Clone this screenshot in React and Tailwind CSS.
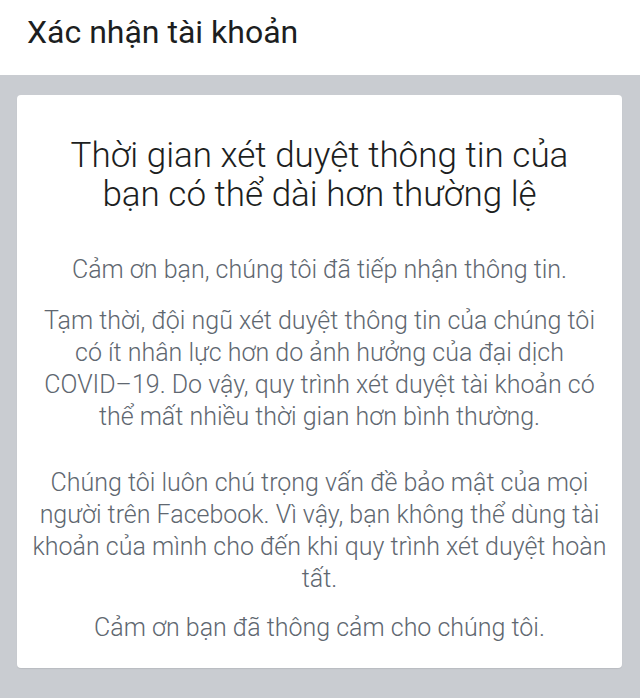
import React from 'react'

const paras = [
  { text: 'Cảm ơn bạn, chúng tôi đã tiếp nhận thông tin.', cls: '' },
  {
    text: 'Tạm thời, đội ngũ xét duyệt thông tin của chúng tôi có ít nhân lực hơn do ảnh hưởng của đại dịch COVID–19. Do vậy, quy trình xét duyệt tài khoản có thể mất nhiều thời gian hơn bình thường.',
    cls: 'mt-[19px]',
  },
  {
    text: 'Chúng tôi luôn chú trọng vấn đề bảo mật của mọi người trên Facebook. Vì vậy, bạn không thể dùng tài khoản của mình cho đến khi quy trình xét duyệt hoàn tất.',
    cls: 'mt-[34px]',
  },
  { text: 'Cảm ơn bạn đã thông cảm cho chúng tôi.', cls: 'mt-[17px]' },
]

export default function App() {
  return (
    <div className="w-[640px] h-[698px] bg-[#c9ccd1] font-['Roboto',sans-serif] overflow-hidden">
      <header className="h-[75px] bg-white pl-[27px] pt-[13px]">
        <h1 className="text-[32px] leading-[38px] text-[#1c1e21]">Xác nhận tài khoản</h1>
      </header>
      <div className="pl-[17px] pr-[18px] pt-[20px]">
        <div className="bg-white rounded-[4px] h-[573px] px-[15px] pt-[41px] text-center shadow-[0_1px_1px_rgba(0,0,0,0.08)]">
          <h2 className="w-[530px] mx-auto text-[35px] leading-[39px] font-light text-[#1c1e21]">
            Thời gian xét duyệt thông tin của bạn có thể dài hơn thường lệ
          </h2>
          <div className="mt-[40px] text-[25px] leading-[32px] font-light text-[#606770]">
            {paras.map((p, i) => (
              <p key={i} className={p.cls}>{p.text}</p>
            ))}
          </div>
        </div>
      </div>
    </div>
  )
}
